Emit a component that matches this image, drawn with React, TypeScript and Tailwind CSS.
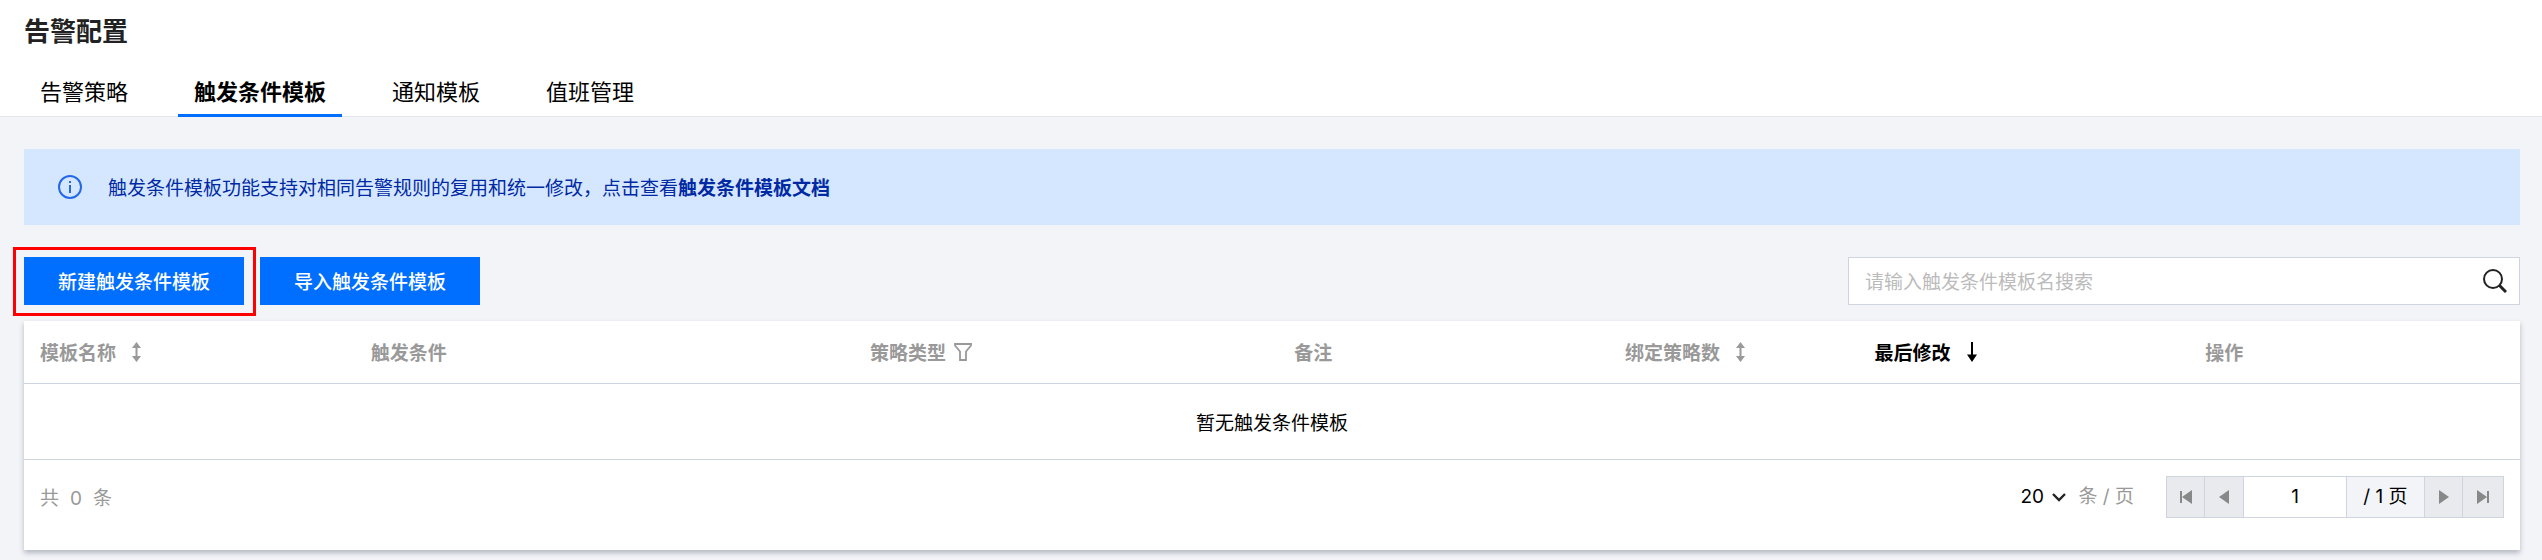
import { useState } from 'react';

const tabs = ['告警策略', '触发条件模板', '通知模板', '值班管理'];

type Control = 'sort' | 'sorted' | 'filter';

interface Column {
  title: string;
  width: string;
  control?: Control;
}

const columns: Column[] = [
  { title: '模板名称', width: 'w-[13.25%]', control: 'sort' },
  { title: '触发条件', width: 'w-[20%]' },
  { title: '策略类型', width: 'w-[17%]', control: 'filter' },
  { title: '备注', width: 'w-[13.25%]' },
  { title: '绑定策略数', width: 'w-[10%]', control: 'sort' },
  { title: '最后修改', width: 'w-[13.25%]', control: 'sorted' },
  { title: '操作', width: 'w-[13.25%]' }
];

function InfoIcon() {
  return (
    <svg width="24" height="24" viewBox="0 0 24 24" fill="none" stroke="#2468e8" strokeWidth="2" aria-hidden="true">
      <circle cx="12" cy="12" r="11" />
      <path d="M12 10v8M12 6v2" />
    </svg>
  );
}

function SearchIcon() {
  return (
    <svg width="24" height="24" viewBox="0 0 24 24" fill="none" stroke="#222" strokeWidth="2" aria-hidden="true">
      <circle cx="10" cy="10" r="9" />
      <path d="M16 16l7 7" strokeWidth="3" />
    </svg>
  );
}

function SortIcon() {
  return (
    <svg width="9" height="20" viewBox="0 0 9 20" fill="currentColor" aria-hidden="true">
      <path d="M4.5 0L9 6H5.5v8H9l-4.5 6L0 14h3.5V6H0z" />
    </svg>
  );
}

function SortDownIcon() {
  return (
    <svg width="10" height="20" viewBox="0 0 10 20" fill="currentColor" aria-hidden="true">
      <path d="M4 0h2v12.5h4L5 20 0 12.500h4z" />
    </svg>
  );
}

function FilterIcon() {
  return (
    <svg width="18" height="18" viewBox="0 0 18 18" fill="none" stroke="currentColor" strokeWidth="1.8" aria-hidden="true">
      <path d="M1 1h16v1.500L12 8.500V17H6V8.500L1 2.500z" />
    </svg>
  );
}

function PagerIcon({ kind }: { kind: 'first' | 'prev' | 'next' | 'last' }) {
  const paths = {
    first: 'M0 1h2v12H0zM12 0v14L2 7z',
    prev: 'M11 0v14L1 7z',
    next: 'M1 0v14l10-7z',
    last: 'M10 1h2v12h-2zM0 0v14l10-7z'
  };
  return (
    <svg width="12" height="14" viewBox="0 0 12 14" fill="#888" aria-hidden="true">
      <path d={paths[kind]} />
    </svg>
  );
}

function HeaderCell({ column }: { column: Column }) {
  if (!column.control) {
    return <span>{column.title}</span>;
  }
  if (column.control === 'filter') {
    return (
      <button type="button" className="flex items-center gap-2">
        {column.title}
        <FilterIcon />
      </button>
    );
  }
  return (
    <button type="button" className="flex items-center gap-4">
      {column.title}
      {column.control === 'sorted' ? <SortDownIcon /> : <SortIcon />}
    </button>
  );
}

export default function App() {
  const [active, setActive] = useState(1);
  const [page, setPage] = useState('1');

  return (
    <div className="min-h-screen bg-[#f2f4f8] pb-2.5 font-['Noto_Sans_CJK_SC',sans-serif] text-[19px] leading-6 text-black">
      <header className="border-b border-[#e3e6ec] bg-white px-6 pt-3.5">
        <h1 className="text-[26px] leading-8 font-bold text-[#222]">告警配置</h1>
        <div role="tablist" className="mt-5.5 flex gap-[34px]">
          {tabs.map((tab, idx) => (
            <button
              key={tab}
              type="button"
              role="tab"
              aria-selected={idx === active}
              onClick={() => setActive(idx)}
              className={`-mb-px border-b-3 px-4 pt-1.5 pb-2 text-[22px] leading-8 ${
                idx === active ? 'border-[#006eff] font-bold' : 'border-transparent'
              }`}
            >
              {tab}
            </button>
          ))}
        </div>
      </header>

      <main className="pt-8 pr-[22px] pl-6">
        <div className="flex h-[76px] items-center gap-[26px] bg-[#d5e7ff] px-[34px] text-[#0029a3]">
          <InfoIcon />
          <p>
            触发条件模板功能支持对相同告警规则的复用和统一修改，点击查看
            <a href="#doc" className="font-bold">触发条件模板文档</a>
          </p>
        </div>

        {/* Toolbar */}
        <div className="mt-8 flex items-center justify-between">
          <div className="flex gap-4">
            <div className="relative">
              <button type="button" className="h-12 bg-[#006eff] px-[34px] font-medium text-white">新建触发条件模板</button>
              <div className="pointer-events-none absolute -top-2.5 -right-3 -bottom-[11px] -left-[11px] border-3 border-[#ff0000]" />
            </div>
            <button type="button" className="h-12 bg-[#006eff] px-[34px] font-medium text-white">导入触发条件模板</button>
          </div>
          <div className="flex h-12 w-[672px] items-center border border-[#cfd5de] bg-white pr-3 pl-4">
            <input
              type="text"
              aria-label="搜索模板"
              placeholder="请输入触发条件模板名搜索"
              className="min-w-0 flex-1 bg-transparent outline-none placeholder:text-[#bbb]"
            />
            <button type="button" aria-label="搜索">
              <SearchIcon />
            </button>
          </div>
        </div>

        {/* Template list */}
        <section className="mt-4 bg-white shadow-[0_3px_5px_rgba(54,58,80,0.32)]">
          <table className="w-full table-fixed border-separate border-spacing-0">
            <thead>
              <tr>
                {columns.map((column) => (
                  <th
                    key={column.title}
                    scope="col"
                    className={`${column.width} h-[63px] border-b border-[#cfd5de] px-4 text-left font-bold ${
                      column.control === 'sorted' ? 'text-black' : 'text-[#999]'
                    }`}
                  >
                    <HeaderCell column={column} />
                  </th>
                ))}
              </tr>
            </thead>
            <tbody>
              <tr>
                <td colSpan={columns.length} className="h-[76px] border-b border-[#cfd5de] text-center">暂无触发条件模板</td>
              </tr>
            </tbody>
          </table>

          <div className="flex h-[90px] items-start justify-between px-4 pt-4">
            <p className="flex items-baseline gap-[11px] leading-[42px] text-[#999]">
              <span>共</span>
              <span className="font-['Inter']">0</span>
              <span>条</span>
            </p>
            <div className="flex h-[42px] items-center">
              <label className="flex items-center gap-3 text-[#999]">
                <span className="relative flex items-center">
                  <select aria-label="每页条数" className="w-[46px] appearance-none bg-transparent font-['Inter'] text-black outline-none">
                    <option>20</option>
                    <option>50</option>
                  </select>
                  <svg className="pointer-events-none absolute right-0" width="14" height="9" viewBox="0 0 14 9" fill="none" stroke="#222" strokeWidth="2.4" aria-hidden="true">
                    <path d="M1 1l6 6 6-6" />
                  </svg>
                </span>
                <span className="font-['Inter','Noto_Sans_CJK_SC',sans-serif]">条 / 页</span>
              </label>
              <div className="ml-8 flex h-[42px] divide-x divide-[#cfd5de] border border-[#cfd5de]">
                <button type="button" aria-label="首页" className="flex w-[38px] items-center justify-center bg-[#e8eaee]">
                  <PagerIcon kind="first" />
                </button>
                <button type="button" aria-label="上一页" className="flex w-[39px] items-center justify-center bg-[#e8eaee]">
                  <PagerIcon kind="prev" />
                </button>
                <input
                  type="text"
                  aria-label="页码"
                  value={page}
                  onChange={(e) => setPage(e.target.value)}
                  className="w-[103px] bg-white text-center font-['Inter'] outline-none"
                />
                <span className="flex w-[78px] items-center justify-center bg-[#f2f4f8] font-['Inter','Noto_Sans_CJK_SC',sans-serif]">/ 1 页</span>
                <button type="button" aria-label="下一页" className="flex w-[38px] items-center justify-center bg-[#e8eaee]">
                  <PagerIcon kind="next" />
                </button>
                <button type="button" aria-label="末页" className="flex w-10 items-center justify-center bg-[#e8eaee]">
                  <PagerIcon kind="last" />
                </button>
              </div>
            </div>
          </div>
        </section>
      </main>
    </div>
  );
}
